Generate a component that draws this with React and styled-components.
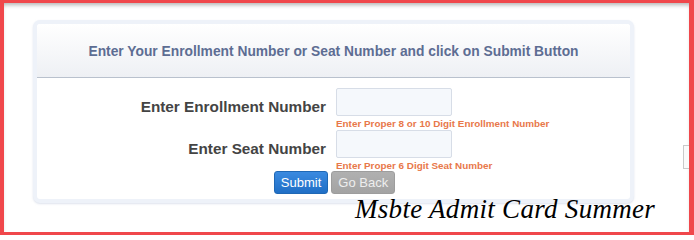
import styled, { createGlobalStyle } from 'styled-components';

const GlobalStyle = createGlobalStyle`
  html, body {
    margin: 0;
    padding: 0;
    background: #fff;
  }
  body {
    font-family: "Liberation Sans", Arial, sans-serif;
  }
`;

const Frame = styled.div`
  position: relative;
  box-sizing: border-box;
  width: 694px;
  height: 235px;
  overflow: hidden;
  border-style: solid;
  border-color: #f0474b;
  border-width: 3px 5px 3px 4px;
  padding: 17px 0 0 29px;
  background: #fff;
  box-shadow: inset 0 4px 4px -2px rgba(0, 0, 0, 0.3);
`;

const Panel = styled.div`
  box-sizing: border-box;
  width: 601px;
  height: 183px;
  border: 4px solid #eef2f9;
  border-radius: 7px;
  background: #fff;
  box-shadow: 0 1px 2px rgba(190, 200, 220, 0.5);
  overflow: hidden;
`;

const Header = styled.div`
  height: 52px;
  display: flex;
  align-items: center;
  justify-content: center;
  background: linear-gradient(#ffffff, #eef0f4);
  border-bottom: 1px solid #b9c1cd;
  color: #5d6d93;
  font-size: 13.8px;
  font-weight: bold;
  padding-top: 1px;
  white-space: nowrap;
`;

const Body = styled.div`
  padding-top: 10px;
  display: flex;
  flex-direction: column;
`;

const Row = styled.div`
  display: grid;
  grid-template-columns: 289px 1fr;
  column-gap: 10px;
`;

const Label = styled.div`
  display: flex;
  align-items: flex-end;
  justify-content: flex-end;
  height: 28px;
  box-sizing: border-box;
  color: #444;
  font-size: 15.3px;
  font-weight: bold;
  white-space: nowrap;
`;

const Field = styled.div`
  display: flex;
  flex-direction: column;
`;

const Input = styled.input`
  box-sizing: border-box;
  width: 116px;
  height: 28px;
  margin: 0;
  border: 1px solid #d7dde7;
  border-radius: 2px;
  background: #f5f8fc;
`;

const Hint = styled.span`
  height: 13px;
  line-height: 13px;
  margin-top: 1px;
  color: #e8784a;
  font-size: 9.9px;
  font-weight: bold;
  white-space: nowrap;
`;

const Buttons = styled.div`
  display: flex;
  justify-content: center;
  gap: 3px;
  margin-top: -1px;
  padding-left: 2px;
`;

const Button = styled.button`
  height: 23px;
  padding: 0 6px;
  border: 1px solid ${p => (p.$grey ? '#9d9d9d' : '#1f68b5')};
  border-radius: 3px;
  background: ${p => (p.$grey ? 'linear-gradient(#b0b0b0, #a3a3a3)' : 'linear-gradient(#3a8ae0, #206fc6)')};
  color: ${p => (p.$grey ? '#eeeeee' : '#fff')};
  font-family: "Liberation Sans", Arial, sans-serif;
  font-size: 13px;
  line-height: 21px;
`;

const Caption = styled.div`
  position: absolute;
  left: 351px;
  top: 191px;
  color: #000;
  font-family: "Liberation Serif", "DejaVu Serif", serif;
  font-style: italic;
  font-size: 27px;
  letter-spacing: 0.3px;
  white-space: nowrap;
`;

const EdgeTab = styled.div`
  position: absolute;
  right: 0;
  top: 142px;
  width: 5px;
  height: 22px;
  border: 1px solid #c9c9c9;
  border-right: none;
  background: #fafafa;
`;

export default function App() {
  return (
    <>
      <GlobalStyle />
      <Frame>
        <Panel>
          <Header>Enter Your Enrollment Number or Seat Number and click on Submit Button</Header>
          <Body>
            <Row>
              <Label>Enter Enrollment Number</Label>
              <Field>
                <Input type="text" />
                <Hint>Enter Proper 8 or 10 Digit Enrollment Number</Hint>
              </Field>
            </Row>
            <Row>
              <Label>Enter Seat Number</Label>
              <Field>
                <Input type="text" />
                <Hint>Enter Proper 6 Digit Seat Number</Hint>
              </Field>
            </Row>
            <Buttons>
              <Button>Submit</Button>
              <Button $grey>Go Back</Button>
            </Buttons>
          </Body>
        </Panel>
        <EdgeTab />
        <Caption>Msbte Admit Card Summer</Caption>
      </Frame>
    </>
  );
}
